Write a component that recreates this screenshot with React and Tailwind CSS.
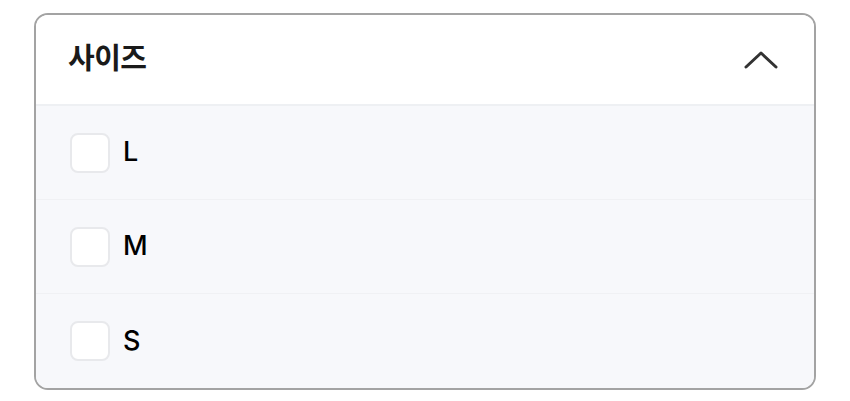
const sizes = ["L", "M", "S"];

function ChevronUp() {
  return (
    <svg width="34" height="20" viewBox="0 0 34 20" fill="none" className="text-[#333]">
      <path d="M2 17 L17 3 L32 17" stroke="currentColor" strokeWidth="3" strokeLinecap="round" strokeLinejoin="round" />
    </svg>
  );
}

export default function App() {
  return (
    <div className="w-[850px] h-[401px] bg-white pt-[13px] pl-[34px] font-['Inter','Noto_Sans_CJK_KR',sans-serif]">
      <div className="w-[782px] overflow-hidden rounded-[14px] border-2 border-[#a3a3a3]">
        <div className="flex h-[91px] items-center justify-between border-b-2 border-[#eef0f3] bg-white pl-[32px] pr-[36px]">
          <span className="text-[29px] font-bold tracking-[-0.5px] text-[#1a1a1a] pb-[2px]">사이즈</span>
          <ChevronUp />
        </div>
        <div className="bg-[#f7f8fb]">
          {sizes.map((s, i) => (
            <label
              key={s}
              className={
                "flex h-[94px] items-center gap-[13px] pl-[34px] " +
                (i < sizes.length - 1 ? "border-b border-[#f0f1f4]" : "")
              }
            >
              <span className="h-[40px] w-[40px] rounded-[8px] border-2 border-[#e8e9ec] bg-white" />
              <span className="text-[27px] font-medium text-black">{s}</span>
            </label>
          ))}
        </div>
      </div>
    </div>
  );
}
